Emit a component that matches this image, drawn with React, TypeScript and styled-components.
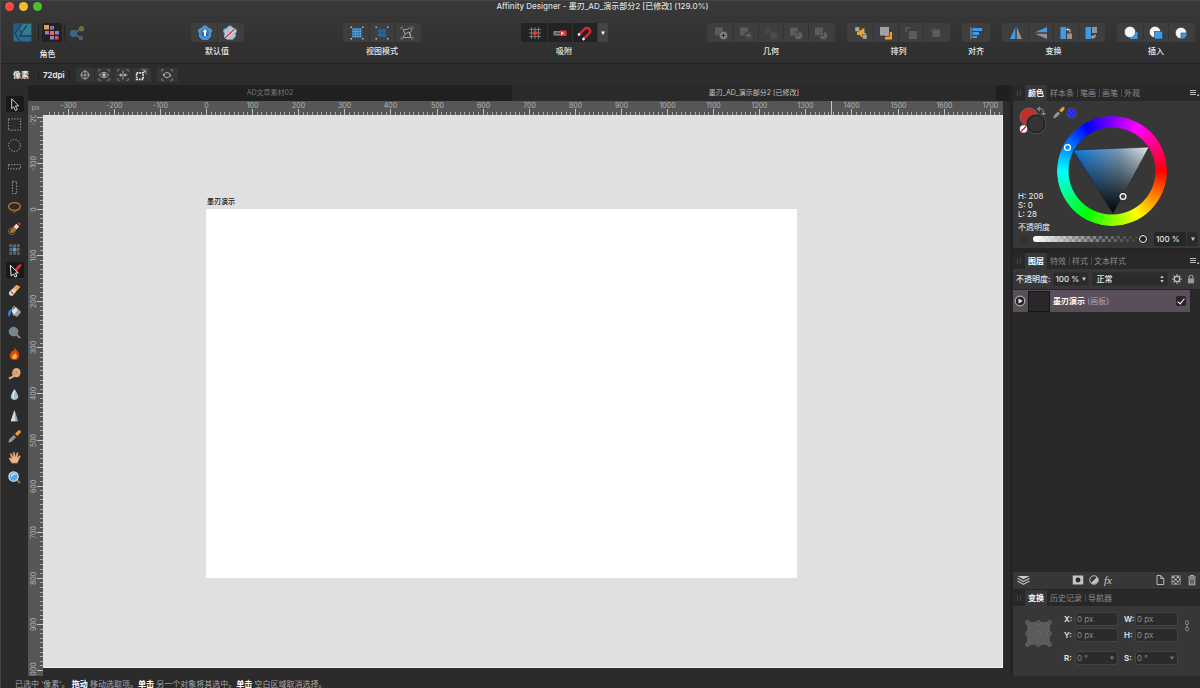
import React from "react";
import styled, { createGlobalStyle } from "styled-components";

const Global = createGlobalStyle`
  * { box-sizing: border-box; }
  html, body { margin: 0; padding: 0; background: #2b2b2b; }
  body, button, input, select {
    font-family: Inter, "Noto Sans CJK SC", "Liberation Sans", sans-serif;
    font-size: 8px;
    line-height: 10px;
    color: #e6e6e6;
  }
  button { border: 0; padding: 0; margin: 0; background: none; display: inline-flex; align-items: center; justify-content: center; }
  svg { display: block; flex: none; }
`;

/* ---------- window frame ---------- */

const Window = styled.div`
  display: flex;
  flex-direction: column;
  height: 100vh;
  overflow: hidden;
  background: #2b2b2b;
  border-left: 1px solid #454545;
  border-top: 1px solid #454545;
`;

const TopArea = styled.header`
  background: linear-gradient(#393939, #2e2e2e);
  border-bottom: 1px solid #222;
`;

const TitleBar = styled.div`
  display: grid;
  grid-template-columns: 1fr auto 1fr;
  align-items: center;
  height: 11px;
  padding-left: 4px;
`;

const Lights = styled.div`
  display: flex;
  gap: 5px;
`;

const Light = styled.button<{ $color: string }>`
  width: 9px;
  height: 9px;
  border-radius: 50%;
  background: ${(p) => p.$color};
`;

const Title = styled.h1`
  margin: 0;
  font-size: 8px;
  line-height: 11px;
  font-weight: 500;
  color: #dedede;
`;

const Toolbar = styled.div`
  display: flex;
  align-items: flex-start;
  height: 51px;
  padding: 11px 5px 0 6px;
`;

const Spacer = styled.div`
  flex: 1;
`;

const Group = styled.div`
  display: flex;
  flex-direction: column;
  align-items: center;
  gap: 3px;
`;

const PersonaGroup = styled(Group)`
  margin-right: 3px;
`;

const EndGroups = styled.div`
  display: flex;
  gap: 12px;
`;

const GroupLabel = styled.span<{ $low?: boolean }>`
  font-weight: 500;
  line-height: 12px;
  color: #e8e8e8;
  padding-top: ${(p) => (p.$low ? 3 : 0)}px;
`;

const ButtonStrip = styled.div<{ $dark?: boolean }>`
  display: flex;
  gap: 1px;
  padding: 0 2px;
  height: 19px;
  border-radius: 2px;
  background: ${(p) => (p.$dark ? "#232323" : "#3e3e3e")};
  overflow: hidden;
`;

const ToolbarButton = styled.button`
  width: 24px;
  height: 19px;
  &:not(:last-child) { box-shadow: 1px 0 0 #333; }
`;

const StripArrow = styled.button`
  width: 10px;
  height: 19px;
  margin-right: -2px;
  background: #444;
`;

const Personas = styled.div`
  display: flex;
  height: 19px;
`;

const Persona = styled.button<{ $width: number; $active?: boolean }>`
  width: ${(p) => p.$width}px;
  height: 19px;
  border-left: ${(p) => (p.$active ? "1px solid #242424" : "0")};
  border-right: ${(p) => (p.$active ? "1px solid #242424" : "0")};
  svg { background: ${(p) => (p.$active ? "#222" : "none")}; border-radius: 2px; }
`;

const ContextBar = styled.div`
  display: flex;
  align-items: center;
  height: 21px;
  padding-left: 12px;
  background: #2c2c2c;
`;

const ContextText = styled.span`
  font-weight: 600;
  color: #ececec;
`;

const ContextDpi = styled(ContextText)`
  margin: 0 6px 0 9px;
  padding: 0 4px;
  border-left: 1px solid #202020;
  border-right: 1px solid #202020;
`;

const ContextButton = styled.button<{ $apart?: boolean }>`
  width: ${(p) => (p.$apart ? 22 : 19)}px;
  height: 14px;
  margin-left: ${(p) => (p.$apart ? 5 : 0)}px;
  background: #363636;
  border-right: 1px solid #2c2c2c;
`;

const Main = styled.main`
  flex: 1;
  display: flex;
  min-height: 0;
`;

const ToolColumn = styled.nav`
  display: flex;
  flex-direction: column;
  justify-content: space-between;
  align-items: center;
  width: 27px;
  height: 401px;
  padding: 11px 0 0 0;
`;

const ToolButton = styled.button<{ $active?: boolean }>`
  width: 18px;
  height: 16px;
  border-radius: 2px;
  background: ${(p) => (p.$active ? "#191919" : "transparent")};
`;

/* ---------- document ---------- */

const DocumentColumn = styled.section`
  flex: 1;
  min-width: 0;
  display: flex;
  flex-direction: column;
`;

const DocumentTabs = styled.div`
  display: flex;
  height: 16px;
  padding-right: 14px;
  background: #1f1f1f;
`;

const DocumentTab = styled.button<{ $active?: boolean }>`
  flex: 1;
  font-size: 7px;
  color: ${(p) => (p.$active ? "#c4c4c4" : "#767676")};
  background: ${(p) => (p.$active ? "#2a2a2a" : "#202020")};
`;

const DocumentGrid = styled.div`
  flex: 1;
  min-height: 0;
  display: grid;
  grid-template-columns: 15px minmax(0, 1fr);
  grid-template-rows: 14px minmax(0, 1fr);
  padding-right: 7px;
`;

const RulerCorner = styled.div`
  background: #555;
  color: #aaa;
  font-size: 7px;
  line-height: 14px;
  text-align: center;
`;

const RulerDrawing = styled.svg`
  width: 100%;
  height: 100%;
  background: #565656;
  overflow: hidden;
  text { font-family: Inter, sans-serif; font-size: 7px; fill: #b4b4b4; }
`;

const CanvasHolder = styled.div`
  padding-bottom: 8px;
  min-height: 0;
`;

const Canvas = styled.div`
  position: relative;
  height: 100%;
  overflow: hidden;
  background: #e0e0e0;
  border-right: 1px solid #f6f6f6;
  border-bottom: 1px solid #f2f2f2;
`;

const Artboard = styled.div`
  position: absolute;
  left: 163px;
  top: 94px;
  width: 591px;
  height: 369px;
  background: #fff;
`;

const ArtboardName = styled.span`
  position: absolute;
  left: 164px;
  top: 82px;
  font-size: 7px;
  line-height: 10px;
  font-weight: 500;
  color: #111;
`;

/* ---------- panels ---------- */

const PanelColumn = styled.aside`
  display: flex;
  flex-direction: column;
  width: 190px;
  padding-left: 3px;
  background: #242424;
`;

const PanelHeader = styled.div`
  display: flex;
  align-items: center;
  height: 16px;
  flex: none;
  padding: 0 1px 0 4px;
  background: #282828;
`;

const Grip = styled.span`
  width: 4px;
  height: 6px;
  margin-right: 4px;
  border-left: 1px solid #444;
  border-right: 1px solid #444;
`;

const PanelTab = styled.button<{ $active?: boolean; $divided?: boolean }>`
  height: ${(p) => (p.$active ? 16 : 8)}px;
  padding: 0 3px 0 ${(p) => (p.$divided ? 2 : 3)}px;
  color: ${(p) => (p.$active ? "#fff" : "#8c8c8c")};
  font-weight: ${(p) => (p.$active ? 700 : 400)};
  background: ${(p) => (p.$active ? "#373737" : "transparent")};
  border-left: ${(p) => (p.$divided ? "1px solid #484848" : "0")};
`;

const PanelMenu = styled.button`
  margin-left: auto;
`;

const PanelBody = styled.div`
  background: #373737;
`;

const ColorBody = styled(PanelBody)`
  display: flex;
  flex-direction: column;
  height: 147px;
  margin-bottom: 5px;
`;

const ColorTop = styled.div`
  display: flex;
  height: 131px;
  padding-left: 5px;
`;

const ColorSide = styled.div`
  display: flex;
  flex-direction: column;
  justify-content: space-between;
  width: 39px;
  padding-top: 4px;
`;

const Values = styled.div`
  display: flex;
  flex-direction: column;
  white-space: nowrap;
  line-height: 9px;
  color: #f0f0f0;
`;

const OpacityCaption = styled.label`
  padding-top: 3px;
  line-height: 10px;
`;

const Wheel = styled.div`
  display: grid;
  width: 110px;
  height: 110px;
  margin-top: 15px;
  > * { grid-area: 1 / 1; }
`;

const HueRing = styled.div`
  border-radius: 50%;
  background: conic-gradient(from 90deg, #f00, #ff0, #0f0, #0ff, #00f, #f0f, #f00);
  mask: radial-gradient(circle, transparent 43px, #000 44px);
`;

const WheelMarks = styled.svg`
  position: relative;
  z-index: 1;
`;

const SliderRow = styled.div`
  display: flex;
  align-items: center;
  height: 14px;
  padding: 0 2px 0 7px;
`;

const NoiseDot = styled.button`
  width: 8px;
  height: 8px;
  margin-right: 5px;
  border-radius: 50%;
  background: #303030;
`;

const Slider = styled.input`
  appearance: none;
  flex: 1;
  min-width: 0;
  height: 6px;
  margin: 0 7px 0 0;
  border-radius: 3px;
  background:
    linear-gradient(90deg, #fff, rgba(60, 60, 60, 0.35) 60%, #303030),
    repeating-conic-gradient(#444 0 25%, #999 0 50%) 0 0 / 6px 6px;
  &::-webkit-slider-thumb {
    appearance: none;
    width: 8px;
    height: 8px;
    border-radius: 50%;
    border: 1px solid #fff;
    background: #222;
    box-shadow: 0 0 0 1px #222;
  }
`;

const PercentField = styled.input`
  width: 32px;
  height: 14px;
  padding: 0 2px;
  border: 0;
  background: #262626;
  font-weight: 500;
  border-radius: 2px 0 0 2px;
`;

const PercentArrow = styled.button`
  width: 11px;
  height: 14px;
  margin-left: 1px;
  background: #2b2b2b;
`;

const LayersPanel = styled.section`
  flex: 1;
  min-height: 0;
  display: flex;
  flex-direction: column;
`;

const LayerOptions = styled(PanelBody)`
  display: flex;
  align-items: center;
  height: 20px;
  padding: 0 4px 0 3px;
  font-weight: 500;
  margin-bottom: 1px;
  label { white-space: nowrap; }
`;

const SelectBox = styled.div<{ $width?: number }>`
  display: flex;
  align-items: center;
  height: 14px;
  width: ${(p) => (p.$width ? `${p.$width}px` : "auto")};
  flex: ${(p) => (p.$width ? "none" : "1")};
  min-width: 0;
  margin-left: 3px;
  padding-right: ${(p) => (p.$width ? 2 : 3)}px;
  padding-left: ${(p) => (p.$width ? 1 : 3)}px;
  background: #2b2b2b;
  border: 1px solid #303030;
  border-radius: 2px;
`;

const PlainSelect = styled.select`
  appearance: none;
  flex: 1;
  min-width: 0;
  height: 12px;
  padding: 0;
  border: 0;
  background: transparent;
  font-weight: 500;
`;

const OptionIcon = styled.button`
  margin-left: 4px;
`;

const LayerList = styled.div`
  flex: 1;
  background: #282828;
  padding-right: 10px;
`;

const LayerRow = styled.div`
  display: flex;
  align-items: center;
  height: 22px;
  padding: 0 4px 0 1px;
  background: #5b4e5b;
`;

const Thumbnail = styled.span`
  width: 22px;
  height: 21px;
  margin: 0 3px 0 2px;
  background: #292929;
  border: 1px solid #151515;
`;

const LayerName = styled.label`
  flex: 1;
  color: #aca4ac;
  strong { color: #fff; font-weight: 700; }
`;

const Tick = styled.input`
  appearance: none;
  width: 10px;
  height: 10px;
  margin: 0;
  background: #262626;
  border-radius: 2px;
  display: grid;
  place-items: center;
  &:checked::after {
    content: "";
    width: 3px;
    height: 6px;
    margin-top: -2px;
    border: solid #fff;
    border-width: 0 1px 1px 0;
    transform: rotate(40deg);
  }
`;

const LayerFooter = styled(PanelBody)`
  display: flex;
  align-items: center;
  height: 17px;
  padding: 0 2px 1px 4px;
  margin-bottom: 1px;
`;

const FooterGroup = styled.div`
  display: flex;
  align-items: center;
  gap: 4px;
  margin-left: auto;
`;

const FxMark = styled.span`
  font-family: "Liberation Serif", serif;
  font-style: italic;
  font-size: 11px;
  color: #d0d0d0;
`;

const TransformBody = styled(PanelBody)`
  display: flex;
  height: 70px;
  padding: 6px 8px 0 12px;
`;

const AnchorBox = styled.div`
  padding-top: 8px;
  width: 39px;
`;

const FieldColumns = styled.div`
  display: grid;
  grid-template-columns: 54px 54px;
  column-gap: 6px;
  row-gap: 2px;
  align-content: start;
`;

const Field = styled.label<{ $apart?: boolean }>`
  display: flex;
  align-items: center;
  justify-content: space-between;
  font-weight: 600;
  margin-top: ${(p) => (p.$apart ? 7 : 0)}px;
`;

const FieldFrame = styled.span`
  display: flex;
  align-items: center;
  flex: none;
  width: 43px;
  height: 14px;
  padding-right: 3px;
  background: #2b2b2b;
  border: 1px solid #434343;
  border-radius: 3px;
`;

const FieldInput = styled.input`
  flex: 1;
  min-width: 0;
  height: 12px;
  padding: 0 1px;
  border: 0;
  background: transparent;
  color: #8a8a8a;
`;

const LinkButton = styled.button`
  width: 12px;
  height: 28px;
  margin-left: auto;
  margin-right: -1px;
`;

const StatusBar = styled.footer`
  flex: none;
  height: 12px;
  padding: 3px 0 0 14px;
  overflow: hidden;
  white-space: pre;
  color: #a8a8a8;
  background: #2a2a2a;
  line-height: 10px;
  strong { color: #fff; font-weight: 700; }
`;

/* ---------- icons ---------- */

type IconProps = { children: React.ReactNode; size?: number };
const Icon = ({ children, size = 16 }: IconProps) => (
  <svg width={size} height={size} viewBox="0 0 16 16" fill="none" aria-hidden="true">
    {children}
  </svg>
);

const DownArrow = ({ size = 4, color = "#ccc" }: { size?: number; color?: string }) => (
  <svg width={size} height={size} viewBox="0 0 4 4" aria-hidden="true">
    <path d="M0 0.5H4L2 4Z" fill={color} />
  </svg>
);

const corners = "M2 4V2H4M12 2H14V4M14 12V14H12M4 14H2V12";

const DesignerLogo = (
  <svg width="19" height="19" viewBox="0 0 19 19" fill="none" aria-hidden="true">
    <rect x="0.500" y="0.500" width="18" height="18" rx="1" fill="#2f6a90" />
    <path d="M10 1H18V11.500H7Z" fill="#357c8c" />
    <path d="M1 1H7.500L1 11Z" fill="#285c7f" />
    <path d="M8.500 1L2 10.500L7 18.500" stroke="#17415d" strokeWidth="1.300" />
    <path d="M14 2L8.500 10L7 13H18.500M7 7.500L9 11" stroke="#17415d" strokeWidth="1.300" />
  </svg>
);

const PixelPersona = (
  <svg width="20" height="19" viewBox="0 0 20 19" aria-hidden="true">
    <rect x="2" y="2" width="5" height="4.500" fill="#ee9850" />
    <rect x="8" y="3" width="4" height="3.500" fill="#8175ba" />
    <rect x="3" y="8" width="4" height="3.500" fill="#8a83cc" />
    <rect x="8" y="8" width="4" height="4" fill="#f0664e" />
    <rect x="13" y="8" width="4" height="3.500" fill="#8b82cf" />
    <rect x="8" y="13" width="4" height="3.500" fill="#9185cd" />
    <rect x="13" y="13" width="3.500" height="3.500" fill="#e84b53" />
  </svg>
);

const ExportPersona = (
  <Icon>
    <path d="M5 8.500L12 3.500M5 8.500L11.500 13" stroke="#777" strokeWidth="1.200" />
    <circle cx="4.500" cy="8.500" r="3.700" fill="#3d6780" />
    <circle cx="12.500" cy="3.800" r="2.700" fill="#5f7548" />
    <circle cx="11.800" cy="13" r="2.200" fill="#635680" />
  </Icon>
);

const flower = "M8 1C9.500 0.800 10.800 1.800 11 3.500C13 3.200 14.800 4.500 14.500 6.300C14.400 7.300 13.800 8 13.200 8.500C14.200 10.300 13.500 12.300 12 12.800C11.800 14.500 9.500 15.200 8 14C6.500 15.200 4.200 14.500 4 12.800C2.500 12.300 1.800 10.300 2.800 8.500C2.200 8 1.600 7.300 1.500 6.300C1.200 4.500 3 3.200 5 3.500C5.200 1.800 6.500 0.800 8 1Z";

const SyncDefaults = (
  <Icon>
    <path d={flower} fill="#3d91d8" stroke="#86c4f0" strokeWidth="0.600" />
    <circle cx="8" cy="8" r="3.600" fill="#2468a8" />
    <path d="M8 4L10.500 7.200H9V11H7V7.200H5.500Z" fill="#fff" />
  </Icon>
);
const RevertDefaults = (
  <Icon>
    <path d={flower} fill="#b5c1cf" stroke="#66a9dc" strokeWidth="0.800" />
    <path d="M3 13L12.500 4" stroke="#f0e8e8" strokeWidth="3" />
    <path d="M3 13L12.500 4" stroke="#d42a2a" strokeWidth="1.400" />
  </Icon>
);

const dots = "M1.500 1.500H3V3H1.500ZM13 1.500H14.500V3H13ZM1.500 13H3V14.500H1.500ZM13 13H14.500V14.500H13Z";
const ViewPixels = (
  <Icon>
    <path d={dots} fill="#bbb" />
    <rect x="3.500" y="3.500" width="9" height="9" fill="#2b6ea3" />
    <path d="M4 3.500V12.500M6.500 3.500V12.500M9 3.500V12.500M11.500 3.500V12.500M3.500 4H12.500M3.500 6.500H12.500M3.500 9H12.500M3.500 11.500H12.500" stroke="#56a5e0" strokeWidth="0.800" />
  </Icon>
);
const ViewRetina = (
  <Icon>
    <path d={dots} fill="#bbb" />
    <rect x="3.500" y="3.500" width="9" height="9" fill="#2a4f6e" />
    <path d="M6 4V12M10 4V12M4 6H12M4 10H12" stroke="#34668e" strokeWidth="1.500" />
  </Icon>
);
const ViewOutline = (
  <Icon>
    <path d={corners} stroke="#999" strokeDasharray="1 0.600" />
    <path d="M4 4.500H8C8.500 3 11 2.500 12.500 4.500C13 6 12 7.500 10.500 7.500L12 12.500H4L6 9L4 4.500ZM6 9L10 7L12 12.500" stroke="#aaa" strokeWidth="0.900" />
  </Icon>
);

const SnapGrid = (
  <Icon>
    <path d="M4.500 2V14M8 2V14M11.500 2V14M2 4.500H14M2 8H14M2 11.500H14" stroke="#858585" strokeWidth="0.900" />
    <rect x="6.300" y="6.300" width="3.500" height="3.500" fill="#f33" />
  </Icon>
);
const SnapMove = (
  <Icon>
    <rect x="1.500" y="6" width="6.500" height="4.500" fill="#858585" />
    <rect x="8" y="5.500" width="6.500" height="5.500" fill="#ee3437" />
    <path d="M3 8.200H10" stroke="#333" />
    <path d="M9 6.500L12 8.200L9 10Z" fill="#fff" />
  </Icon>
);
const Magnet = (
  <Icon>
    <g transform="rotate(45 8 8)" strokeWidth="2.300">
      <path d="M4.800 12V5.500C4.800 1 11.200 1 11.200 5.500V12" stroke="#e32636" />
      <path d="M4.800 12V14.500M11.200 12V14.500" stroke="#eee" />
    </g>
  </Icon>
);

const Geometry = ({ kind }: { kind: number }) => (
  <Icon>
    <path d={kind === 2 ? "M5 3H9L5 9H2V6Z" : "M2 2.500H10V10.500H2Z"} fill={kind === 2 ? "#484848" : "#5c5c5c"} />
    <circle cx="10.500" cy="10.500" r="4" fill={kind === 0 ? "#8c8c8c" : kind < 3 ? "#4b4b4b" : "#646464"} stroke="#424242" strokeWidth="0.700" />
    {kind < 2 && <path d={kind === 0 ? "M8.500 10.500H12.500M10.500 8.500V12.500" : "M8.500 10.500H12.500"} stroke={kind === 0 ? "#222" : "#7a7a7a"} strokeWidth="1.200" />}
    {kind === 2 && <path d="M10 7V11H14" stroke="#555" />}
    {kind === 3 && <path d="M7 7H10.500V10.500H8" stroke="#414141" />}
    {kind === 4 && <path d="M10.500 7V10.500H7" stroke="#414141" strokeWidth="1.200" />}
  </Icon>
);

const Order = ({ kind }: { kind: number }) => (
  <Icon>
    {kind === 0 && (
      <>
        <path d="M4 5H9V3.500H11.500V8H13V12H7.500V10H4Z" fill="#f0a02f" />
        <rect x="2" y="2" width="4.500" height="4.500" fill="#a8a8a8" stroke="#444" strokeWidth="0.500" />
        <rect x="9.500" y="9.500" width="4.500" height="4.500" fill="#a8a8a8" stroke="#444" strokeWidth="0.500" />
      </>
    )}
    {kind === 1 && (
      <>
        <rect x="7" y="7" width="7" height="7.500" fill="#f0a02f" />
        <path d="M11.500 7V11.500H7" stroke="#7e4c0d" />
        <rect x="2" y="2" width="9" height="8.500" fill="#a0a0a0" />
      </>
    )}
    {kind === 2 && (
      <>
        <path d="M2 7V2H7V4H4V7Z" fill="#525252" />
        <rect x="6" y="6" width="8" height="8" fill="#5c5c5c" />
      </>
    )}
    {kind === 3 && (
      <>
        <path d="M3 4H6M3.500 4V7" stroke="#4d4d4d" />
        <rect x="4.500" y="4.500" width="7.500" height="7.500" fill="#5c5c5c" />
      </>
    )}
  </Icon>
);

const Align = (
  <Icon>
    <path d="M3 2V14" stroke="#999" />
    <path d="M4.500 3H14V6H4.500ZM4.500 7H11V10H4.500ZM4.500 11H9V13H4.500Z" fill="#3d9be9" />
  </Icon>
);
const FlipH = (
  <Icon>
    <path d="M7.300 2V14H2Z" fill="#3d9be9" />
    <path d="M8.800 2V14H14Z" fill="#939393" />
  </Icon>
);
const FlipV = (
  <Icon>
    <path d="M14 7.300H2L14 2Z" fill="#3d9be9" />
    <path d="M14 8.800H2L14 14Z" fill="#939393" />
  </Icon>
);
const RotateCcw = (
  <Icon>
    <rect x="2.500" y="2" width="5.500" height="12" fill="#3d9be9" />
    <rect x="9" y="8.500" width="5" height="5.500" fill="#939393" />
    <path d="M9 4.500H12V7.500M10.500 3L8.500 4.500L10.500 6" stroke="#ddd" strokeWidth="0.900" />
  </Icon>
);
const RotateCw = (
  <Icon>
    <rect x="2.500" y="2" width="5.500" height="12" fill="#3d9be9" />
    <rect x="9" y="2" width="5" height="6" fill="#939393" />
    <path d="M9 12H12V9.500M10.500 10.300L8.500 12L10.500 13.500" stroke="#ddd" strokeWidth="0.900" />
  </Icon>
);

const Insert = ({ kind }: { kind: number }) => (
  <Icon>
    {kind === 0 && <rect x="7" y="7" width="7.500" height="7" fill="#3d9be9" />}
    <circle cx={kind === 2 ? 8 : 7} cy={kind === 2 ? 8 : 7} r="5.700" fill="#f4f4f4" stroke="#333" strokeWidth="0.600" />
    {kind === 1 && <rect x="6.500" y="6.500" width="8" height="7.500" fill="#3d9be9" stroke="#27445b" strokeWidth="0.600" />}
    {kind === 2 && <path d="M8 8H14C14 11.500 12 14 8 14Z" fill="#3d9be9" stroke="#27445b" strokeWidth="0.600" />}
  </Icon>
);

const frameCorners = <path d="M1 3.500V1H3.500M12.500 1H15V3.500M15 12.500V15H12.500M3.500 15H1V12.500" stroke="#888" strokeWidth="1.200" />;

const contextIcons: [string, React.ReactNode][] = [
  ["目标", <Icon size={12}><circle cx="8" cy="8" r="5" stroke="#bbb" /><path d="M8 1.500V14.500M1.500 8H14.500" stroke="#bbb" /></Icon>],
  ["显示", <Icon size={12}>{frameCorners}<path d="M2 8C5 3.500 11 3.500 14 8C11 12.500 5 12.500 2 8Z" stroke="#ccc" /><circle cx="8" cy="8" r="2.200" fill="#ccc" /></Icon>],
  ["对称", <Icon size={12}>{frameCorners}<path d="M8 2V14" stroke="#ccc" /><path d="M2 8H6M14 8H10" stroke="#ccc" /><path d="M4.500 5.500L7 8L4.500 10.500ZM11.500 5.500L9 8L11.500 10.500Z" fill="#ccc" /></Icon>],
  ["变换原点", <Icon size={13}><path d="M7 1.500H14.500V9" stroke="#999" strokeDasharray="2 1" /><rect x="2" y="6" width="8" height="8" stroke="#eee" strokeWidth="2" strokeDasharray="2 1.200" /><path d="M9 7L12.500 3.500M9.500 3.500H12.500V6.500" stroke="#ccc" /></Icon>],
  ["循环", <Icon size={12}>{frameCorners}<path d="M4 9C4 5 9 3 12 7M12 7C12 12 7 13 4 9M4 9L3 6M12 7L13 10" stroke="#ccc" strokeWidth="1.200" /></Icon>],
];

const pointer = "M5 2L12.500 9.500H9L11 13.500L9 14.500L7.200 10.500L5 12.500Z";
const dropper = (
  <>
    <path d="M2 14L3 11L8 6L10 8L5 13Z" fill="#8b9297" stroke="#d5d8da" strokeWidth="0.500" />
    <path d="M7 5L11 9" stroke="#4b3013" strokeWidth="2" />
    <path d="M8.500 5L12 1.500C14 0.500 15.500 2.500 14.500 4L11 7.500Z" fill="#e5a23a" />
  </>
);

const tools: { name: string; icon: React.ReactNode; active?: boolean }[] = [
  { name: "移动", active: true, icon: <path d={pointer} fill="#161616" stroke="#eee" strokeWidth="0.900" /> },
  { name: "矩形选框", icon: <rect x="1.500" y="2" width="13" height="12" stroke="#aaa" strokeDasharray="1.500 1.500" /> },
  { name: "椭圆选框", icon: <circle cx="8" cy="8" r="6.300" stroke="#aaa" strokeDasharray="1.500 1.500" /> },
  { name: "行选框", icon: <rect x="1.500" y="6" width="13" height="4.500" stroke="#aaa" strokeDasharray="1.500 1.500" /> },
  { name: "列选框", icon: <rect x="5.800" y="1.500" width="4.500" height="13" stroke="#aaa" strokeDasharray="1.500 1.500" /> },
  { name: "自由选区", icon: <><ellipse cx="8" cy="7" rx="6.300" ry="4.200" stroke="#c47522" strokeWidth="1.400" /><path d="M4 10C5 13 9 9.500 9 12.500C8.500 14 7 13.500 7 12" stroke="#a25b15" /></> },
  { name: "选区画笔", icon: <><circle cx="5" cy="11" r="3.500" stroke="#aaa" strokeDasharray="1 1" /><path d="M3 13C3 9 5 8 7 6L10 9C8 12 6 13 3 13Z" fill="#b06f30" /><path d="M7 6L10 3L13 6L10 9Z" fill="#e8dfd2" /><path d="M11 3L13 1L15 3L13 5Z" fill="#df2e2e" /></> },
  { name: "像素", icon: <><path d="M2.500 2.500H5.500V5.500H2.500ZM6.500 2.500H9.500V5.500H6.500ZM10.500 2.500H13.500V5.500H10.500ZM2.500 6.500H5.500V9.500H2.500ZM10.500 6.500H13.500V9.500H10.500ZM2.500 10.500H5.500V13.500H2.500ZM6.500 10.500H9.500V13.500H6.500ZM10.500 10.500H13.500V13.500H10.500Z" fill="#656565" /><rect x="6" y="6" width="4" height="4" fill="#3ba2ee" /></> },
  { name: "绘制画笔", active: true, icon: <><path d="M8 7L12 2.500L15 0.500L15.500 3L10.500 9Z" fill="#d92b2b" /><path d="M3.500 2.500L12 10.500L9 10.700L10.500 14L8.500 15L7 11.500L4.500 14Z" fill="#111" stroke="#fff" /></> },
  { name: "擦除", icon: <><path d="M2 10L10 2L14 4L6 13L3 13Z" fill="#e8c9a0" /><path d="M2 10L5 7L9 10L6 13.500L3 13Z" fill="#f2ded8" /><path d="M7 5L10 2L14 4L11 8Z" fill="#f2a336" /><path d="M4 9L7 12" stroke="#d84a3d" strokeWidth="1.500" /></> },
  { name: "填充", icon: <><path d="M4.500 6.500L9.500 3L15 8.500L11 13.500L6.500 12Z" fill="#98a3aa" /><path d="M5 7L9.500 4L11.500 6L7.500 11.500Z" fill="#dfe5e8" /><path d="M6 8C5 1.500 9 1 10 6" stroke="#d6d6d6" strokeWidth="0.900" /><path d="M1.500 13C0.500 8 2.500 5 6 6C4 7 4.500 10 3 13Z" fill="#2c82e8" /></> },
  { name: "减淡", icon: <><circle cx="7" cy="7" r="4.700" fill="#78848c" stroke="#9da8ae" strokeWidth="0.600" /><path d="M10 10L14 14" stroke="#8a8f92" strokeWidth="2" /></> },
  { name: "加深", icon: <><path d="M8 1C9 5 13 5 13 10C13 13 11 15 8 15C5 15 3 13 3 10C3 7 5 8 5 5C7 6 8 4 8 1Z" fill="#dc4314" /><path d="M8.500 7C9 9 11 9 10.500 12C10 14 6 14.500 5.500 12C5.300 10 8 10 8.500 7Z" fill="#ffc029" /></> },
  { name: "涂抹", icon: <><path d="M1.500 12.500L6 10.500C4.500 6.500 6 2.500 10 2C14 2 15 6 14 9C13 12 10 12.500 8 11.500L3 14.500Z" fill="#e7ad7c" /><path d="M7 5.500C8 7 7 9 9 10M9.500 4.500C10.500 6.500 10 8 11.500 9" stroke="#a3683e" strokeWidth="0.800" /></> },
  { name: "模糊", icon: <><path d="M8 2C10 5 12 8 12 10.500C12 15 4 15 4 10.500C4 8 6 5 8 2Z" fill="#a7bdc9" /><path d="M8 4C6 8 5.500 10 7 12" stroke="#edf5f8" strokeWidth="1.300" /></> },
  { name: "锐化", icon: <><path d="M8 2L12 14H4Z" fill="#8fa5b1" /><path d="M8 2L9 14H4Z" fill="#d5e1e7" /></> },
  { name: "颜色选取器", icon: dropper },
  { name: "抓手", icon: <><path d="M5 14L2 9L3 8L5 9L3 4L4.500 3.500L6.500 7L6.500 2L8 2L9 7L10.500 2.500L12 3L11.300 8L13.500 5.500L14.500 6.500L11 14Z" fill="#edb58a" stroke="#8c593b" strokeWidth="0.500" /></> },
  { name: "缩放", icon: <><path d="M10.500 10.500L14 14" stroke="#9b754a" strokeWidth="2" /><circle cx="7" cy="7" r="5" fill="#5aa6e3" stroke="#d9e2e8" strokeWidth="1.200" /><path d="M4.500 7C5 4.500 7 4 9 4.500" stroke="#d7edff" strokeWidth="1.300" /></> },
];

/* ---------- rulers ---------- */

const PX_PER_UNIT = 0.461;

type RulerProps = { origin: number; from: number; to: number; vertical?: boolean; cursor?: number };
const Ruler = ({ origin, from, to, vertical, cursor }: RulerProps) => {
  const depth = vertical ? 15 : 14;
  const marks: React.ReactNode[] = [];
  for (let unit = from; unit <= to; unit += 10) {
    const at = Math.round(origin + unit * PX_PER_UNIT) + 0.5;
    const major = unit % 100 === 0;
    const length = major ? 6 : 3;
    marks.push(
      <path
        key={unit}
        d={vertical ? `M${depth - length} ${at}H${depth}` : `M${at} ${depth - length}V${depth}`}
        stroke={major ? "#c4c4c4" : "#a8a8a8"}
      />
    );
    if (major) {
      marks.push(
        <text key={`n${unit}`} textAnchor="middle" transform={vertical ? `translate(8 ${at}) rotate(-90)` : `translate(${at} 7)`}>
          {unit}
        </text>
      );
    }
  }
  return (
    <RulerDrawing aria-hidden="true">
      {marks}
      {cursor !== undefined && <path d={`M${cursor + 0.5} 0V14`} stroke="#c8c8c8" />}
    </RulerDrawing>
  );
};

/* ---------- parts ---------- */

type StripProps = { label: string; icons: React.ReactNode[]; dark?: boolean; menu?: boolean };
const Strip = ({ label, icons, dark, menu }: StripProps) => (
  <Group>
    <ButtonStrip $dark={dark}>
      {icons.map((icon, i) => (
        <ToolbarButton key={i} aria-label={`${label} ${i + 1}`}>{icon}</ToolbarButton>
      ))}
      {menu && <StripArrow aria-label={`${label}选项`}><DownArrow color="#fff" /></StripArrow>}
    </ButtonStrip>
    <GroupLabel>{label}</GroupLabel>
  </Group>
);

const Header = ({ tabs, menu }: { tabs: string[]; menu?: boolean }) => (
  <PanelHeader>
    <Grip />
    {tabs.map((tab, i) => (
      <PanelTab key={tab} $active={i === 0} $divided={i > 1}>{tab}</PanelTab>
    ))}
    {menu && (
      <PanelMenu aria-label="面板选项">
        <svg width="9" height="7" viewBox="0 0 9 7" aria-hidden="true">
          <path d="M0 0.500H6M0 2.500H6M0 4.500H6" stroke="#bbb" />
          <rect x="7.500" y="4.500" width="1.500" height="1.500" fill="#ddd" />
        </svg>
      </PanelMenu>
    )}
  </PanelHeader>
);

const Swatches = () => (
  <svg width="62" height="30" viewBox="0 0 62 30" fill="none" aria-hidden="true">
    <circle cx="11" cy="12" r="9" fill="#c62d2d" stroke="#777" strokeWidth="0.700" />
    <circle cx="18" cy="19" r="9" fill="#353535" stroke="#1c1c1c" strokeWidth="2" />
    <circle cx="18" cy="19" r="9.700" stroke="#707070" strokeWidth="0.600" />
    <path d="M20 4C24 3 26 5 25.500 9M22 2L19.500 4L22 6M23.500 8L25.500 10L27.500 8" stroke="#aaa" />
    <circle cx="5.500" cy="24" r="3.700" fill="#fff" />
    <path d="M3 26.500L8 21.500" stroke="#e02020" strokeWidth="1.400" />
    <g transform="translate(34 1) scale(0.850)">{dropper}</g>
    <circle cx="53.500" cy="8" r="5" fill="#2824e8" stroke="#555" strokeWidth="0.800" />
    <path d="M51 6H52M55 6H56M53 8H54M51 10H52M55 10H56" stroke="#8b54ff" />
  </svg>
);

const ColorPanel = () => (
  <section>
    <Header tabs={["颜色", "样本条", "笔画", "画笔", "外观"]} menu />
    <ColorBody>
      <ColorTop>
        <ColorSide>
          <Swatches />
          <Values>
            <span>H: 208</span>
            <span>S: 0</span>
            <span>L: 28</span>
            <OpacityCaption htmlFor="opacity">不透明度</OpacityCaption>
          </Values>
        </ColorSide>
        <Wheel>
          <HueRing />
          <WheelMarks width="110" height="110" viewBox="0 0 110 110" fill="none" aria-hidden="true">
            <defs>
              <linearGradient id="tint" gradientUnits="userSpaceOnUse" x1="16" y1="34" x2="92" y2="31">
                <stop offset="0" stopColor="#0b80f0" />
                <stop offset="0.600" stopColor="#86abc8" />
                <stop offset="1" stopColor="#fff" />
              </linearGradient>
              <linearGradient id="shade" gradientUnits="userSpaceOnUse" x1="54" y1="34" x2="56" y2="98">
                <stop offset="0" stopColor="#000" stopOpacity="0.100" />
                <stop offset="1" stopColor="#000" />
              </linearGradient>
            </defs>
            <path d="M16 34L92 31L56 98Z" fill="url(#tint)" />
            <path d="M16 34L92 31L56 98Z" fill="url(#shade)" stroke="#1c1c1c" strokeWidth="0.600" />
            <circle cx="10.500" cy="31.500" r="2.900" stroke="#fff" strokeWidth="1.300" />
            <circle cx="66" cy="80.500" r="3.700" stroke="#222" />
            <circle cx="66" cy="80.500" r="2.900" fill="#444" stroke="#fff" strokeWidth="1.300" />
          </WheelMarks>
        </Wheel>
      </ColorTop>
      <SliderRow>
        <NoiseDot aria-label="杂色" />
        <Slider id="opacity" type="range" min="0" max="100" defaultValue="100" />
        <PercentField aria-label="不透明度数值" defaultValue="100 %" />
        <PercentArrow aria-label="打开不透明度"><DownArrow /></PercentArrow>
      </SliderRow>
    </ColorBody>
  </section>
);

const LayerPanel = () => (
  <LayersPanel>
    <Header tabs={["图层", "特效", "样式", "文本样式"]} menu />
    <LayerOptions>
      <label htmlFor="layer-opacity">不透明度:</label>
      <SelectBox $width={36}>
        <PlainSelect id="layer-opacity"><option>100 %</option></PlainSelect>
        <DownArrow />
      </SelectBox>
      <SelectBox>
        <PlainSelect aria-label="混合模式"><option>正常</option></PlainSelect>
        <svg width="4" height="8" viewBox="0 0 4 8" aria-hidden="true">
          <path d="M2 0.500L3.700 3H0.300ZM2 7.500L3.700 5H0.300Z" fill="#ccc" />
        </svg>
      </SelectBox>
      <OptionIcon aria-label="混合选项">
        <Icon size={10}>
          <circle cx="8" cy="8" r="4.300" stroke="#bbb" strokeWidth="2" />
          <path d="M8 0.500V3M8 13V15.500M0.500 8H3M13 8H15.500M2.700 2.700L4.500 4.500M11.500 11.500L13.300 13.300M13.300 2.700L11.500 4.500M4.500 11.500L2.700 13.300" stroke="#bbb" strokeWidth="2" />
        </Icon>
      </OptionIcon>
      <OptionIcon aria-label="锁定">
        <Icon size={10}>
          <path d="M5 7V5C5 1 11 1 11 5V7" stroke="#999" strokeWidth="1.800" />
          <rect x="3" y="7" width="10" height="8" fill="#999" />
        </Icon>
      </OptionIcon>
    </LayerOptions>
    <LayerList>
      <LayerRow>
        <button aria-label="展开图层">
          <svg width="12" height="12" viewBox="0 0 12 12" aria-hidden="true">
            <circle cx="6" cy="6" r="4.900" fill="#262326" stroke="#c8c8c8" />
            <path d="M4.500 3.500L8.700 6L4.500 8.500Z" fill="#eee" />
          </svg>
        </button>
        <Thumbnail />
        <LayerName htmlFor="layer-visible"><strong>墨刃演示</strong> (画板)</LayerName>
        <Tick id="layer-visible" type="checkbox" defaultChecked />
      </LayerRow>
    </LayerList>
    <LayerFooter>
      <button aria-label="编辑所有图层">
        <svg width="13" height="12" viewBox="0 0 13 12" fill="none" aria-hidden="true">
          <path d="M0.500 2H12.500L6.500 5.300Z" fill="#ccc" />
          <path d="M0.500 4.300L6.500 7.500L12.500 4.300M0.500 7L6.500 10.200L12.500 7" stroke="#bbb" strokeWidth="1.300" />
        </svg>
      </button>
      <FooterGroup>
        <button aria-label="蒙版">
          <Icon size={12}><rect x="1" y="2" width="14" height="12" fill="#c4c4c4" /><circle cx="8" cy="8" r="3.300" fill="#2b2b2b" /></Icon>
        </button>
        <button aria-label="调整">
          <Icon size={12}><circle cx="8" cy="8" r="5.700" stroke="#c4c4c4" strokeWidth="1.200" /><path d="M12 4A5.700 5.700 0 0 1 4 12Z" fill="#c4c4c4" /></Icon>
        </button>
        <button aria-label="图层特效"><FxMark>fx</FxMark></button>
      </FooterGroup>
      <FooterGroup>
        <button aria-label="添加图层">
          <Icon size={12}><path d="M4 2H9L13 6V14H4ZM9 2V6H13" stroke="#bbb" strokeWidth="1.300" /></Icon>
        </button>
        <button aria-label="添加像素图层">
          <Icon size={12}><rect x="2.500" y="2.500" width="11" height="11" stroke="#aaa" /><path d="M3 3H6V5.500H3ZM9 3H12V5.500H9ZM6 6H9V8.500H6ZM12 6H13.500V8.500H12ZM3 9H6V11H3ZM9 9H12V11H9ZM6 11.500H9V13.500H6Z" fill="#bbb" /></Icon>
        </button>
        <button aria-label="删除图层">
          <Icon size={12}><path d="M2.500 4H13.500M6 4V2H10V4" stroke="#aaa" strokeWidth="1.400" /><path d="M4 5.500H12V14.500H4Z" fill="#858585" stroke="#aaa" /><path d="M6.500 7V13M9.500 7V13" stroke="#333" /></Icon>
        </button>
      </FooterGroup>
    </LayerFooter>
  </LayersPanel>
);

const anchors = [2.5, 13, 23.5];

const fields: { name: string; value: string; drop?: boolean }[] = [
  { name: "X", value: "0 px" },
  { name: "W", value: "0 px" },
  { name: "Y", value: "0 px" },
  { name: "H", value: "0 px" },
  { name: "R", value: "0 °", drop: true },
  { name: "S", value: "0 °", drop: true },
];

const TransformPanel = () => (
  <section>
    <Header tabs={["变换", "历史记录", "导航器"]} />
    <TransformBody>
      <AnchorBox>
        <svg width="27" height="27" viewBox="0 0 26 26" aria-hidden="true">
          <rect x="2" y="2" width="22" height="22" fill="#5b5b5b" />
          {anchors.flatMap((x) =>
            anchors.map((y) => <circle key={`${x}-${y}`} cx={x} cy={y} r="2" fill="#555" stroke="#6d6d6d" strokeWidth="0.600" />)
          )}
        </svg>
      </AnchorBox>
      <FieldColumns>
        {fields.map((f) => (
          <Field key={f.name} $apart={f.drop}>
            {f.name}:
            <FieldFrame>
              <FieldInput defaultValue={f.value} />
              {f.drop && <DownArrow color="#777" />}
            </FieldFrame>
          </Field>
        ))}
      </FieldColumns>
      <LinkButton aria-label="锁定宽高比">
        <svg width="6" height="12" viewBox="0 0 6 12" fill="none" aria-hidden="true">
          <rect x="1.500" y="0.700" width="3" height="4" rx="1.500" stroke="#888" />
          <rect x="1.500" y="7" width="3" height="4" rx="1.500" stroke="#888" />
          <path d="M3 3.500V8.500" stroke="#888" />
        </svg>
      </LinkButton>
    </TransformBody>
  </section>
);

export default function App() {
  return (
    <Window>
      <Global />
      <TopArea>
        <TitleBar>
          <Lights>
            <Light $color="#fb4b49" aria-label="关闭" />
            <Light $color="#f2bd2c" aria-label="最小化" />
            <Light $color="#4bc22c" aria-label="缩放窗口" />
          </Lights>
          <Title>Affinity Designer - 墨刃_AD_演示部分2 [已修改] (129.0%)</Title>
        </TitleBar>
        <Toolbar>
          <PersonaGroup>
            <Personas>
              <Persona $width={31} aria-label="Designer">{DesignerLogo}</Persona>
              <Persona $width={27} $active aria-label="Pixel">{PixelPersona}</Persona>
              <Persona $width={23} aria-label="Export">{ExportPersona}</Persona>
            </Personas>
            <GroupLabel $low>角色</GroupLabel>
          </PersonaGroup>
          <Spacer />
          <Strip label="默认值" icons={[SyncDefaults, RevertDefaults]} />
          <Spacer />
          <Strip label="视图模式" icons={[ViewPixels, ViewRetina, ViewOutline]} />
          <Spacer />
          <Strip label="吸附" dark menu icons={[SnapGrid, SnapMove, Magnet]} />
          <Spacer />
          <EndGroups>
            <Strip label="几何" icons={[0, 1, 2, 3, 4].map((k) => <Geometry key={k} kind={k} />)} />
            <Strip label="排列" icons={[0, 1, 2, 3].map((k) => <Order key={k} kind={k} />)} />
            <Strip label="对齐" icons={[Align]} />
            <Strip label="变换" icons={[FlipH, FlipV, RotateCcw, RotateCw]} />
            <Strip label="插入" icons={[0, 1, 2].map((k) => <Insert key={k} kind={k} />)} />
          </EndGroups>
        </Toolbar>
      </TopArea>
      <ContextBar>
        <ContextText>像素</ContextText>
        <ContextDpi>72dpi</ContextDpi>
        {contextIcons.map(([name, icon], i) => (
          <ContextButton key={name} aria-label={name} $apart={i === 4}>{icon}</ContextButton>
        ))}
      </ContextBar>
      <Main>
        <ToolColumn>
          {tools.map((tool) => (
            <ToolButton key={tool.name} aria-label={tool.name} $active={tool.active}>
              <Icon size={15}>{tool.icon}</Icon>
            </ToolButton>
          ))}
        </ToolColumn>
        <DocumentColumn>
          <DocumentTabs>
            <DocumentTab>AD文章素材02</DocumentTab>
            <DocumentTab $active>墨刃_AD_演示部分2 [已修改]</DocumentTab>
          </DocumentTabs>
          <DocumentGrid>
            <RulerCorner>px</RulerCorner>
            <Ruler origin={163} from={-340} to={1720} cursor={788} />
            <Ruler origin={94} from={-200} to={1000} vertical />
            <CanvasHolder>
              <Canvas>
                <ArtboardName>墨刃演示</ArtboardName>
                <Artboard />
              </Canvas>
            </CanvasHolder>
          </DocumentGrid>
        </DocumentColumn>
        <PanelColumn>
          <ColorPanel />
          <LayerPanel />
          <TransformPanel />
        </PanelColumn>
      </Main>
      <StatusBar>
        已选中 ‘像素’。 <strong>拖动</strong> 移动选取项。<strong>单击</strong> 另一个对象将其选中。<strong>单击</strong> 空白区域取消选择。
      </StatusBar>
    </Window>
  );
}
